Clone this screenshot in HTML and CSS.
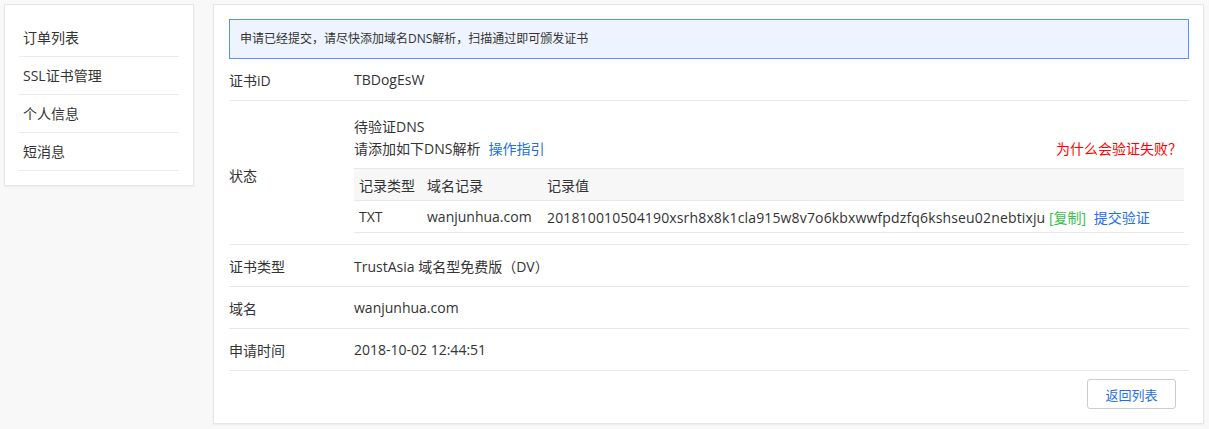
FILE: index.html
```html
<!DOCTYPE html>
<html lang="zh-CN">
<head>
<meta charset="utf-8">
<link rel="stylesheet" href="styles.css">
</head>
<body>
<div class="page">
  <aside class="side">
    <ul class="menu">
      <li class="menu-item">订单列表</li>
      <li class="menu-item">SSL证书管理</li>
      <li class="menu-item">个人信息</li>
      <li class="menu-item">短消息</li>
    </ul>
  </aside>
  <main class="main">
    <div class="alert">申请已经提交，请尽快添加域名DNS解析，扫描通过即可颁发证书</div>
    <div class="row">
      <div class="label">证书iD</div>
      <div class="value">TBDogEsW</div>
    </div>
    <div class="row row-status">
      <div class="label">状态</div>
      <div class="value status">
        <div class="line">待验证DNS</div>
        <div class="line line-split">
          <span>请添加如下DNS解析<a class="link guide">操作指引</a></span>
          <a class="why">为什么会验证失败？</a>
        </div>
        <table class="dns">
          <thead>
            <tr><th class="c1">记录类型</th><th class="c2">域名记录</th><th>记录值</th></tr>
          </thead>
          <tbody>
            <tr><td class="c1">TXT</td><td class="c2">wanjunhua.com</td><td><span class="record">201810010504190xsrh8x8k1cla915w8v7o6kbxwwfpdzfq6kshseu02nebtixju</span> <span class="copy">[复制]</span> <a class="link submit">提交验证</a></td></tr>
          </tbody>
        </table>
      </div>
    </div>
    <div class="row">
      <div class="label">证书类型</div>
      <div class="value">TrustAsia 域名型免费版（DV）</div>
    </div>
    <div class="row">
      <div class="label">域名</div>
      <div class="value">wanjunhua.com</div>
    </div>
    <div class="row">
      <div class="label">申请时间</div>
      <div class="value">2018-10-02 12:44:51</div>
    </div>
    <div class="footer">
      <button class="btn">返回列表</button>
    </div>
  </main>
</div>
</body>
</html>
```

FILE: styles.css
```css
* { box-sizing: border-box; }
html, body { margin: 0; padding: 0; }
body {
  background: #f8f8f8;
  font-family: "Open Sans", "Noto Sans CJK SC", sans-serif;
  font-size: 14px;
  color: #333;
}
.page {
  display: flex;
  align-items: flex-start;
  gap: 19px;
  padding: 4px 5px 4px 4px;
}
.side {
  width: 190px;
  flex: none;
  background: #fff;
  border: 1px solid #e6e6e6;
  box-shadow: 0 1px 2px rgba(0,0,0,0.05);
  padding: 14px 14px 14px 14px;
}
.menu { list-style: none; margin: 0; padding: 0; }
.menu-item {
  height: 38px;
  line-height: 38px;
  padding-left: 4px;
  border-bottom: 1px solid #ebebeb;
}
.main {
  flex: 1;
  height: 420px;
  background: #fff;
  border: 1px solid #e6e6e6;
  box-shadow: 0 1px 2px rgba(0,0,0,0.05);
  padding: 14px 14px 15px 15px;
}
.alert {
  height: 40px;
  border: 1px solid #5593f5;
  background: #edf4ff;
  font-size: 12px;
  line-height: 38px;
  padding-left: 10px;
  color: #333;
}
.row {
  display: flex;
  align-items: center;
  min-height: 42px;
  border-bottom: 1px solid #e8e8e8;
}
.label { width: 125px; flex: none; }
.value { flex: 1; }
.row-status { padding: 15px 0 11px; }
.status { padding-right: 5px; }
.line { line-height: 22px; }
.line-split { display: flex; justify-content: space-between; }
.link { color: #1f6fe5; }
.guide { margin-left: 8px; }
.why { color: #f00; padding-right: 2px; }
.dns {
  width: 100%;
  border-collapse: collapse;
  margin-top: 8px;
  font-size: 14px;
}
.dns th, .dns td {
  text-align: left;
  font-weight: normal;
  padding: 0 5px;
  height: 32px;
  border-top: 1px solid #e8e8e8;
  border-bottom: 1px solid #e8e8e8;
  white-space: nowrap;
}
.dns thead tr { background: #f7f7f7; }
.c1 { width: 68px; }
.c2 { width: 120px; }
.record { letter-spacing: 0.15px; }
.copy { color: #35c24a; }
.submit { margin-left: 4px; }
.footer {
  display: flex;
  justify-content: flex-end;
  padding: 8px 13px 0 0;
}
.btn {
  width: 89px;
  height: 30px;
  background: #fff;
  border: 1px solid #ccc;
  border-radius: 3px;
  color: #1f6fe5;
  font-family: inherit;
  font-size: 13px;
  padding: 0;
}
```
